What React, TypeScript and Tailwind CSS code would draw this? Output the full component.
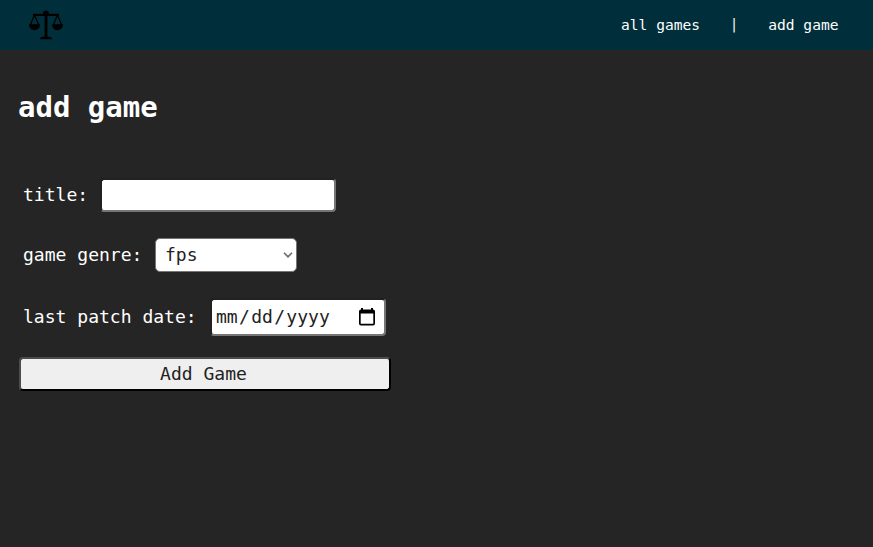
import React from "react";

const mono = "font-['DejaVu_Sans_Mono','Liberation_Mono',monospace]";

function ScalesIcon() {
  return (
    <svg width="34" height="30" viewBox="0 0 34 30" fill="none" stroke="#000" className="block">
      <circle cx="17" cy="3.400" r="2.900" fill="#000" stroke="none" />
      <path d="M4 4.900h26" strokeWidth="2.200" />
      <path d="M17 3v24" strokeWidth="2.800" />
      <path d="M11 29.300c0-1.600 1-2.500 2.500-2.500h7c1.500 0 2.500.9 2.500 2.500z" fill="#000" stroke="none" />
      <path d="M5.500 5L1.300 15M5.500 5L9.800 15M28.500 5L24.200 15M28.500 5L32.700 15" strokeWidth="1.300" />
      <path d="M0 14.300h11c0 3.700-2.300 5.900-5.500 5.900S0 18 0 14.300zM23 14.300h11c0 3.700-2.300 5.900-5.500 5.900S23 18 23 14.300z" fill="#000" stroke="none" />
    </svg>
  );
}

function CalendarIcon() {
  return (
    <svg width="16" height="18" viewBox="0 0 16 18" className="block">
      <path d="M2 0h2v1.500h8V0h2v1.500a2 2 0 0 1 2 2v12a2 2 0 0 1-2 2H2a2 2 0 0 1-2-2v-12a2 2 0 0 1 2-2zM1.700 5.500v10.300h12.600V5.500z" fill="#000" fillRule="evenodd" />
    </svg>
  );
}

export default function App() {
  return (
    <div className={`h-[547px] overflow-hidden bg-[#252525] text-white ${mono}`}>
      <nav className="flex h-[50px] items-center justify-between bg-[#002f3b] pr-[34.500px] pl-[29px] text-[14.600px]">
        <a href="#" aria-label="home"><ScalesIcon /></a>
        <div className="flex items-center">
          <a href="#">all games</a>
          <span className="mx-[30px] pb-[2px] text-[13.500px]">|</span>
          <a href="#">add game</a>
        </div>
      </nav>
      <main className="pl-[18px]">
        <h1 className="pt-[39px] text-[29px] leading-[36px] font-bold">add game</h1>
        <form className="mt-[53px] text-[18.050px]" onSubmit={(e) => e.preventDefault()}>
          <div className="flex h-[34px] items-center pl-[5px]">
            <label htmlFor="title" className="w-[77px] pb-px whitespace-pre">title:</label>
            <input id="title" type="text" className="h-[34px] w-[236px] rounded-[4px] border-2 border-t-[#212121] border-r-[#767676] border-b-[#767676] border-l-[#212121] bg-white px-1 text-black outline-none" />
          </div>
          <div className="mt-[26px] flex h-[34px] items-center pl-[5px]">
            <span className="w-[132px] pb-px whitespace-pre">game genre:</span>
            <div className="flex h-[34px] w-[142px] items-center justify-between rounded-[5px] border border-[#767676] bg-white pr-[3px] pl-[9px] text-[#222]">
              <span className="pb-px">fps</span>
              <svg width="10" height="6" viewBox="0 0 10 6" fill="none" stroke="#6b6b6b" strokeWidth="1.600"><path d="M1 .8l4 4 4-4" /></svg>
            </div>
          </div>
          <div className="mt-[26px] flex h-[38px] items-center pl-[5px]">
            <span className="w-[187px] pb-px whitespace-pre">last patch date:</span>
            <div className="flex h-[38px] w-[176px] items-center justify-between rounded-[4px] border-2 border-t-[#212121] border-r-[#767676] border-b-[#767676] border-l-[#212121] bg-white pr-[9px] pl-1 text-[#222]">
              <span className="flex gap-[1.300px] pb-px"><span>mm</span><span>/</span><span>dd</span><span>/</span><span>yyyy</span></span>
              <CalendarIcon />
            </div>
          </div>
          <button className="mt-[21px] ml-px block h-[34px] w-[372px] rounded-[4px] border-2 border-t-[#4c4c4c] border-r-black border-b-black border-l-[#4c4c4c] bg-[#efefef] pr-[3px] pb-px text-[#222]">Add Game</button>
        </form>
      </main>
    </div>
  );
}
